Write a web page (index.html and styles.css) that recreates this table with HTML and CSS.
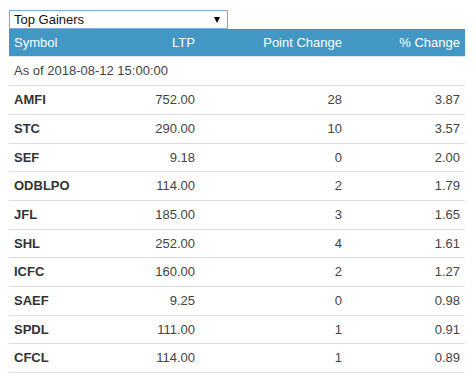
FILE: index.html
```html
<!DOCTYPE html>
<html>
<head>
<meta charset="utf-8">
<link rel="stylesheet" href="styles.css">
</head>
<body>
<div class="page">
  <div class="select">
    <span class="select-text">Top Gainers</span>
    <span class="caret"></span>
  </div>
  <table class="gainers">
    <colgroup>
      <col class="c1"><col class="c2"><col class="c3"><col class="c4">
    </colgroup>
    <thead>
      <tr><th class="left">Symbol</th><th>LTP</th><th>Point Change</th><th>% Change</th></tr>
    </thead>
    <tbody>
      <tr class="asof"><td colspan="4">As of 2018-08-12 15:00:00</td></tr>
      <tr><td class="sym">AMFI</td><td>752.00</td><td>28</td><td>3.87</td></tr>
      <tr><td class="sym">STC</td><td>290.00</td><td>10</td><td>3.57</td></tr>
      <tr class="short"><td class="sym">SEF</td><td>9.18</td><td>0</td><td>2.00</td></tr>
      <tr><td class="sym">ODBLPO</td><td>114.00</td><td>2</td><td>1.79</td></tr>
      <tr><td class="sym">JFL</td><td>185.00</td><td>3</td><td>1.65</td></tr>
      <tr class="short"><td class="sym">SHL</td><td>252.00</td><td>4</td><td>1.61</td></tr>
      <tr><td class="sym">ICFC</td><td>160.00</td><td>2</td><td>1.27</td></tr>
      <tr><td class="sym">SAEF</td><td>9.25</td><td>0</td><td>0.98</td></tr>
      <tr class="short"><td class="sym">SPDL</td><td>111.00</td><td>1</td><td>0.91</td></tr>
      <tr><td class="sym">CFCL</td><td>114.00</td><td>1</td><td>0.89</td></tr>
    </tbody>
  </table>
</div>
</body>
</html>
```
FILE: styles.css
```css
html, body {
  margin: 0;
  padding: 0;
  background: #fff;
}
body {
  font-family: "Liberation Sans", Arial, sans-serif;
  font-size: 13px;
  color: #333;
}
.page {
  padding: 10px 0 0 9px;
  width: 456px;
}
.select {
  box-sizing: border-box;
  width: 219px;
  height: 19px;
  border: 1px solid #7ea7dc;
  display: flex;
  align-items: center;
  justify-content: space-between;
  padding: 0 7px 0 4px;
  color: #111;
  line-height: 17px;
}
.caret {
  width: 0;
  height: 0;
  border-left: 3px solid transparent;
  border-right: 3px solid transparent;
  border-top: 6px solid #000;
}
.gainers {
  border-collapse: collapse;
  width: 456px;
  table-layout: fixed;
}
.c1 { width: 100px; }
.c2 { width: 91px; }
.c3 { width: 147px; }
.c4 { width: 118px; }
.gainers th {
  background: #4397c5;
  color: #fff;
  font-weight: normal;
  text-align: right;
  padding: 4px 5px;
  line-height: 19px;
  border-bottom: 1px solid #dde6ec;
}
.gainers th.left { text-align: left; }
.gainers td {
  text-align: right;
  padding: 5px 5px;
  line-height: 18px;
  border-bottom: 1px solid #dddddd;
  white-space: nowrap;
  color: #444;
}
.gainers tr.short td {
  padding-bottom: 4px;
}
.gainers tr.asof td {
  text-align: left;
  line-height: 18px;
  padding-bottom: 5px;
  color: #444;
}
.gainers td.sym {
  text-align: left;
  font-weight: bold;
  color: #333;
}
```
